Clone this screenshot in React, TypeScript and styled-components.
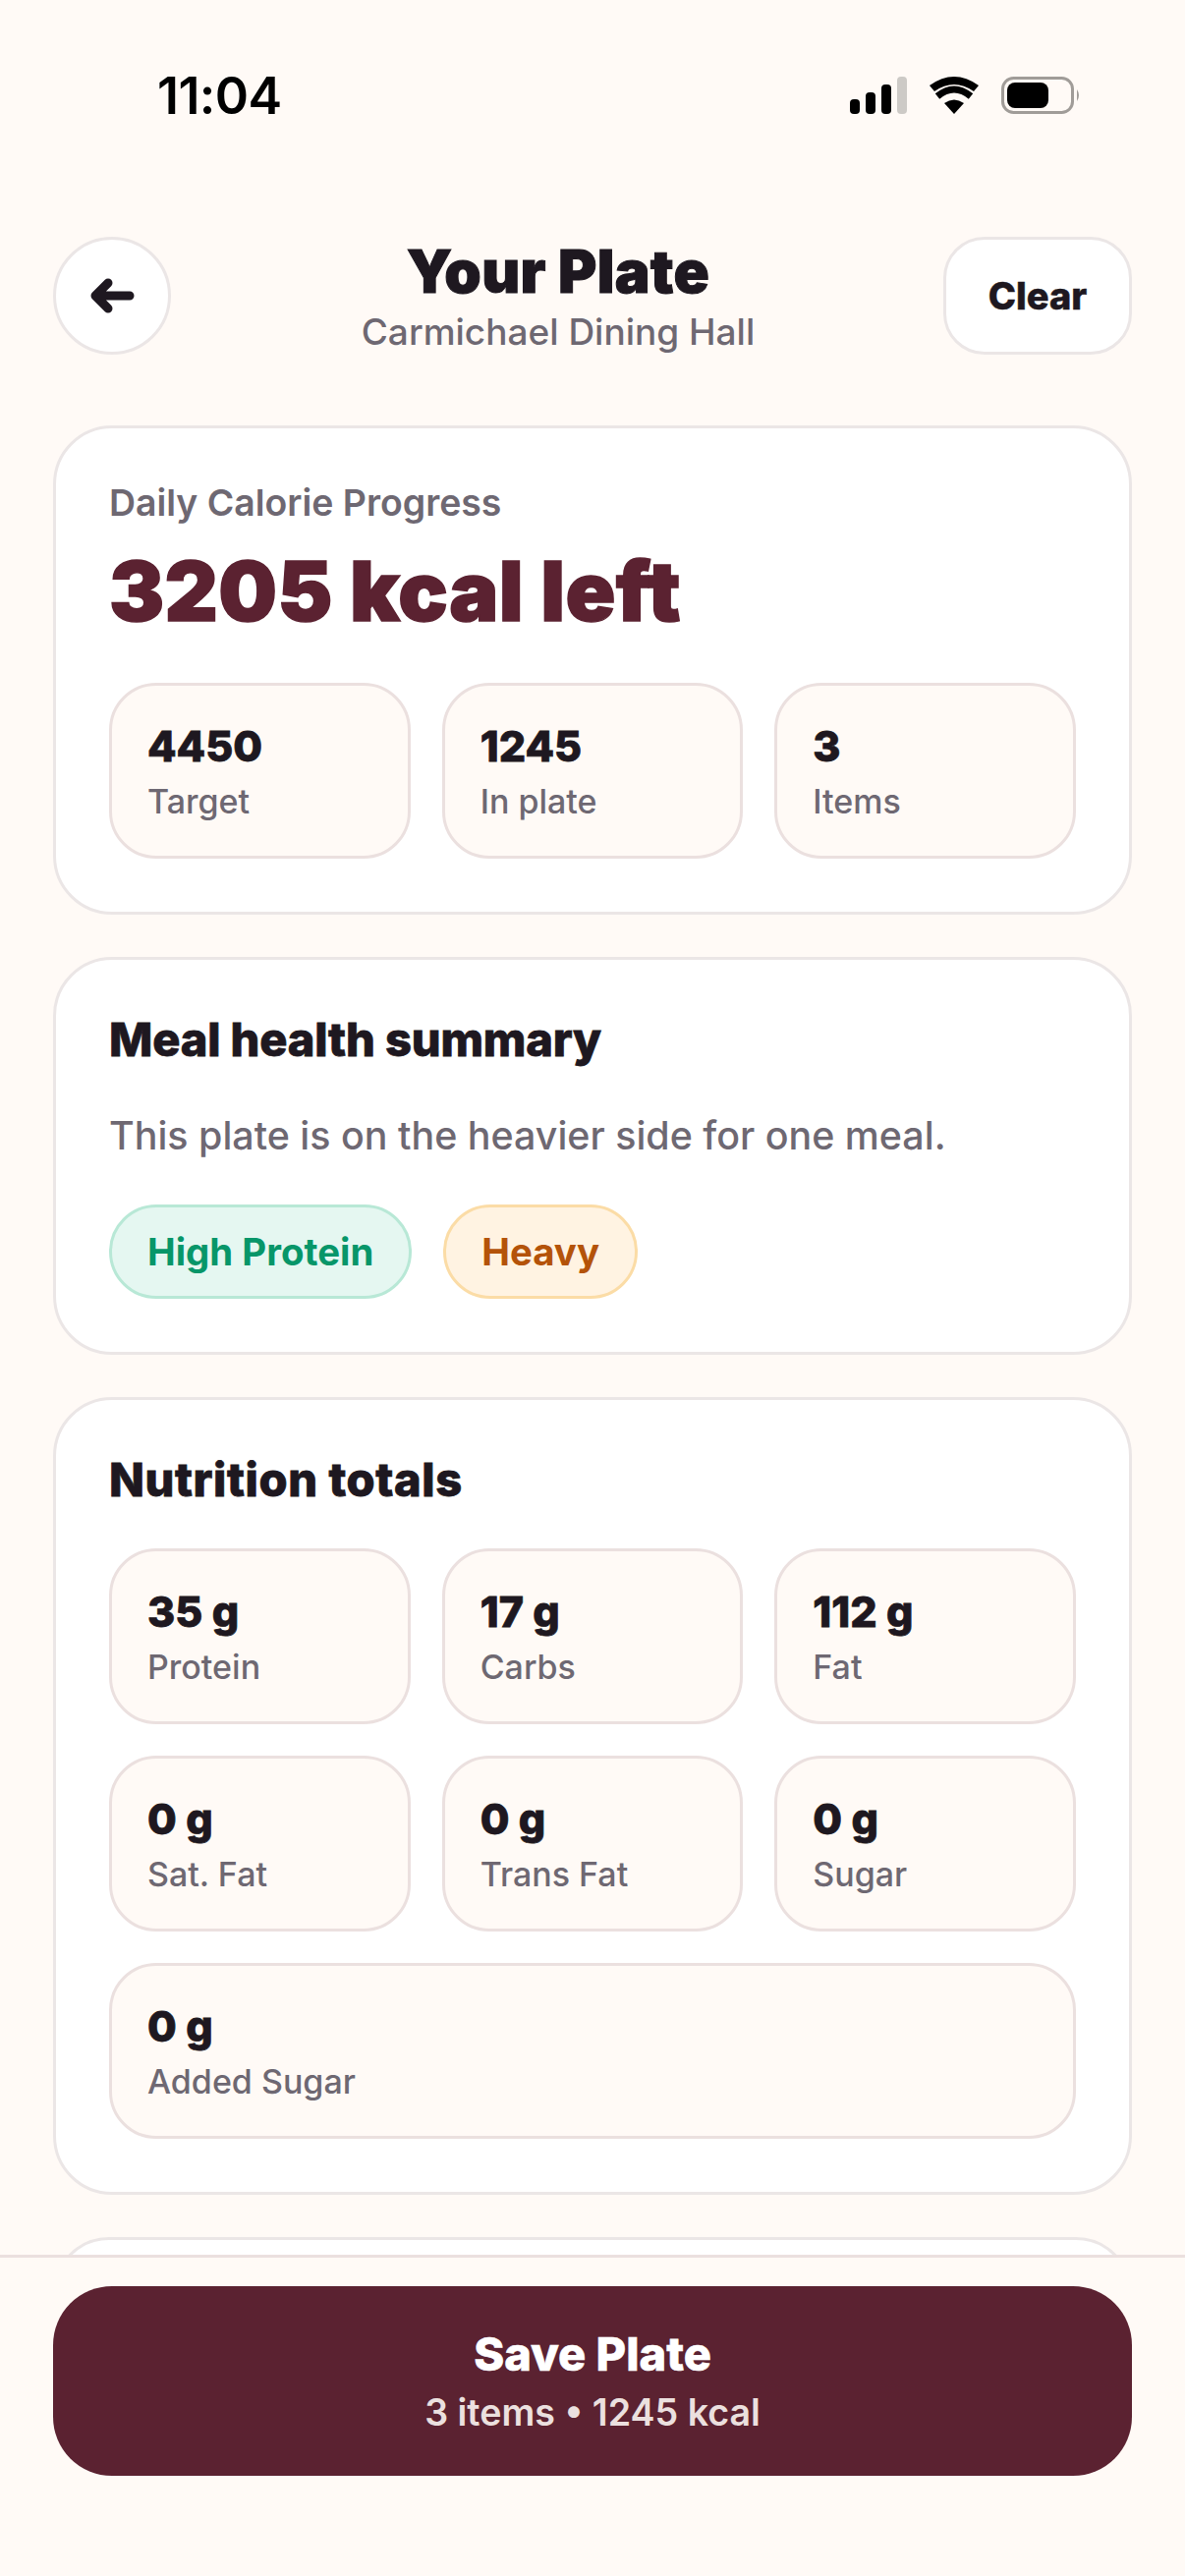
import React from "react";
import styled, { createGlobalStyle } from "styled-components";

const GlobalStyle = createGlobalStyle`
  * { box-sizing: border-box; }
  html, body { margin: 0; padding: 0; background: #fffaf6; }
  body { font-family: Inter, "Noto Sans", sans-serif; color: #1e1820; }
`;

const Screen = styled.div`
  width: 1206px;
  height: 2622px;
  display: flex;
  flex-direction: column;
  overflow: hidden;
  background: #fffaf6;
`;

const StatusBar = styled.div`
  height: 241px;
  flex: none;
  display: flex;
  justify-content: space-between;
  align-items: flex-start;
  padding: 70px 105px 0 160px;
`;

const Clock = styled.div`
  font-size: 52px;
  line-height: 56px;
  font-weight: 600;
  color: #000;
  letter-spacing: -0.6px;
`;

const StatusIcons = styled.div`
  display: flex;
  align-items: center;
  gap: 22px;
  margin-top: 8px;
`;

const Scroll = styled.div`
  flex: 1;
  min-height: 0;
  overflow: hidden;
  padding: 0 54px;
  display: flex;
  flex-direction: column;
`;

const Header = styled.div`
  display: flex;
  align-items: center;
  justify-content: space-between;
  height: 120px;
  flex: none;
  margin-bottom: 72px;
`;

const BackButton = styled.button`
  width: 120px;
  height: 120px;
  padding: 0;
  border-radius: 50%;
  border: 3px solid #ebe6e6;
  background: #fff;
  display: flex;
  align-items: center;
  justify-content: center;
`;

const ClearButton = styled.button`
  width: 192px;
  height: 120px;
  padding: 0;
  border-radius: 42px;
  border: 3px solid #ebe6e6;
  background: #fff;
  font: 800 38px Inter, sans-serif;
  -webkit-text-stroke: 0.5px #1e1820;
  color: #1e1820;
`;

const TitleBlock = styled.div`
  text-align: center;
  margin-left: 2px;
  margin-top: 2px;
`;

const Title = styled.div`
  font-size: 60px;
  line-height: 68px;
  font-weight: 900;
  letter-spacing: 0.3px;
  white-space: nowrap;
  -webkit-text-stroke: 1px #1e1820;
`;

const Subtitle = styled.div`
  font-size: 37px;
  line-height: 50px;
  margin-top: 3px;
  font-weight: 500;
  color: #6e6872;
`;

const Card = styled.section`
  flex: none;
  background: #fff;
  border: 3px solid #ebe6e6;
  border-radius: 60px;
  padding: 54px;
  margin-bottom: 43px;
`;

const Eyebrow = styled.div`
  font-size: 37.4px;
  line-height: 44px;
  font-weight: 600;
  color: #6e6872;
`;

const Remaining = styled.div`
  font-size: 84px;
  line-height: 100px;
  font-weight: 900;
  letter-spacing: 0.4px;
  color: #5b2231;
  margin-top: 18px;
  margin-bottom: 43px;
  -webkit-text-stroke: 1.5px #5b2231;
`;

const StatGrid = styled.div`
  display: grid;
  grid-template-columns: repeat(3, 1fr);
  gap: 32px;
`;

const Stat = styled.div<{ $wide?: boolean }>`
  grid-column: ${(p) => (p.$wide ? "1 / -1" : "auto")};
  height: 179px;
  background: #fffaf6;
  border: 3px solid #ebe0df;
  border-radius: 48px;
  padding: 35px 36px 0;
`;

const StatValue = styled.div`
  font-size: 43px;
  line-height: 52px;
  font-weight: 800;
  color: #1e1820;
  -webkit-text-stroke: 0.8px #1e1820;
`;

const StatLabel = styled.div`
  font-size: 34px;
  line-height: 40px;
  font-weight: 500;
  color: #6e6872;
  margin-top: 11px;
`;

const CardTitle = styled.h2<{ $gap: number; $track: number }>`
  margin: 0 0 ${(p) => p.$gap}px;
  font-size: 47px;
  line-height: 54px;
  font-weight: 800;
  letter-spacing: ${(p) => p.$track}px;
  color: #1e1820;
  -webkit-text-stroke: 0.8px #1e1820;
`;

const Body = styled.p`
  margin: 0 0 43px;
  font-size: 39.4px;
  line-height: 54px;
  font-weight: 500;
  color: #6e6872;
`;

const Summary = styled.div`
  padding-top: 8px;
`;

const Tags = styled.div`
  display: flex;
  gap: 32px;
`;

const Tag = styled.span<{ $tone: "good" | "warn" }>`
  height: 96px;
  padding: 0 36px;
  display: flex;
  align-items: center;
  border-radius: 48px;
  font-size: 38.4px;
  font-weight: 700;
  border: 3px solid ${(p) => (p.$tone === "good" ? "#b8e8d6" : "#fbdca6")};
  background: ${(p) => (p.$tone === "good" ? "#e5f7f1" : "#fff3e2")};
  color: ${(p) => (p.$tone === "good" ? "#079669" : "#b45309")};
`;

const Footer = styled.div`
  flex: none;
  height: 327px;
  border-top: 3px solid #ebe0df;
  background: #fffaf6;
  padding: 29px 54px 0;
`;

const SaveButton = styled.button`
  width: 100%;
  height: 193px;
  border: none;
  border-radius: 60px;
  background: #5b2231;
  display: flex;
  flex-direction: column;
  align-items: center;
  justify-content: center;
  gap: 11px;
  font-family: inherit;
`;

const SaveTitle = styled.span`
  font-size: 47px;
  line-height: 54px;
  font-weight: 800;
  color: #fff;
  -webkit-text-stroke: 0.6px #fff;
`;

const SaveMeta = styled.span`
  font-size: 37.6px;
  line-height: 44px;
  font-weight: 600;
  color: #ebe0df;
`;

const totals = [
  ["35 g", "Protein"],
  ["17 g", "Carbs"],
  ["112 g", "Fat"],
  ["0 g", "Sat. Fat"],
  ["0 g", "Trans Fat"],
  ["0 g", "Sugar"],
];

const App = () => {
  return (
    <>
      <GlobalStyle />
      <Screen>
        <StatusBar>
          <Clock>11:04</Clock>
          <StatusIcons>
            <svg width="58" height="38" viewBox="0 0 58 38">
              <rect x="0" y="23" width="10" height="15" rx="4" fill="#000" />
              <rect x="16" y="16" width="10" height="22" rx="4" fill="#000" />
              <rect x="32" y="8" width="10" height="30" rx="4" fill="#000" />
              <rect x="48" y="0" width="10" height="38" rx="4" fill="#cdcac6" />
            </svg>
            <svg width="52" height="38" viewBox="0 0 52 38">
              <path d="M26 38 L16 27 Q26 20 36 27 Z" fill="#000" />
              <path d="M9 20 Q26 6 43 20" fill="none" stroke="#000" strokeWidth="7" />
              <path d="M1 9 Q26 -9 51 9 L46 15 Q26 1 6 15 Z" fill="#000" />
            </svg>
            <svg width="82" height="38" viewBox="0 0 82 38">
              <rect x="1.5" y="1.5" width="71" height="35" rx="11" fill="none" stroke="#a09c98" strokeWidth="3" />
              <rect x="6" y="6" width="42" height="26" rx="8" fill="#000" />
              <path d="M77 13 Q81 19 77 25 Z" fill="#a09c98" />
            </svg>
          </StatusIcons>
        </StatusBar>
        <Scroll>
          <Header>
            <BackButton aria-label="Back">
              <svg width="46" height="36" viewBox="0 0 46 36">
                <path d="M19 5 L6 18 L19 31 M6 18 H41" fill="none" stroke="#1e1820" strokeWidth="9" strokeLinecap="round" strokeLinejoin="round" />
              </svg>
            </BackButton>
            <TitleBlock>
              <Title>Your Plate</Title>
              <Subtitle>Carmichael Dining Hall</Subtitle>
            </TitleBlock>
            <ClearButton>Clear</ClearButton>
          </Header>

          <Card>
            <Eyebrow>Daily Calorie Progress</Eyebrow>
            <Remaining>3205 kcal left</Remaining>
            <StatGrid>
              <Stat>
                <StatValue>4450</StatValue>
                <StatLabel>Target</StatLabel>
              </Stat>
              <Stat>
                <StatValue>1245</StatValue>
                <StatLabel>In plate</StatLabel>
              </Stat>
              <Stat>
                <StatValue>3</StatValue>
                <StatLabel>Items</StatLabel>
              </Stat>
            </StatGrid>
          </Card>

          <Card>
            <CardTitle $gap={36} $track={-0.15}>
              Meal health summary
            </CardTitle>
            <Summary>
              <Body>This plate is on the heavier side for one meal.</Body>
              <Tags>
                <Tag $tone="good">High Protein</Tag>
                <Tag $tone="warn">Heavy</Tag>
              </Tags>
            </Summary>
          </Card>

          <Card>
            <CardTitle $gap={43} $track={0.6}>
              Nutrition totals
            </CardTitle>
            <StatGrid>
              {totals.map(([value, label]) => (
                <Stat key={label}>
                  <StatValue>{value}</StatValue>
                  <StatLabel>{label}</StatLabel>
                </Stat>
              ))}
              <Stat $wide>
                <StatValue>0 g</StatValue>
                <StatLabel>Added Sugar</StatLabel>
              </Stat>
            </StatGrid>
          </Card>

          <Card />
        </Scroll>
        <Footer>
          <SaveButton>
            <SaveTitle>Save Plate</SaveTitle>
            <SaveMeta>3 items • 1245 kcal</SaveMeta>
          </SaveButton>
        </Footer>
      </Screen>
    </>
  );
};

export default App;
